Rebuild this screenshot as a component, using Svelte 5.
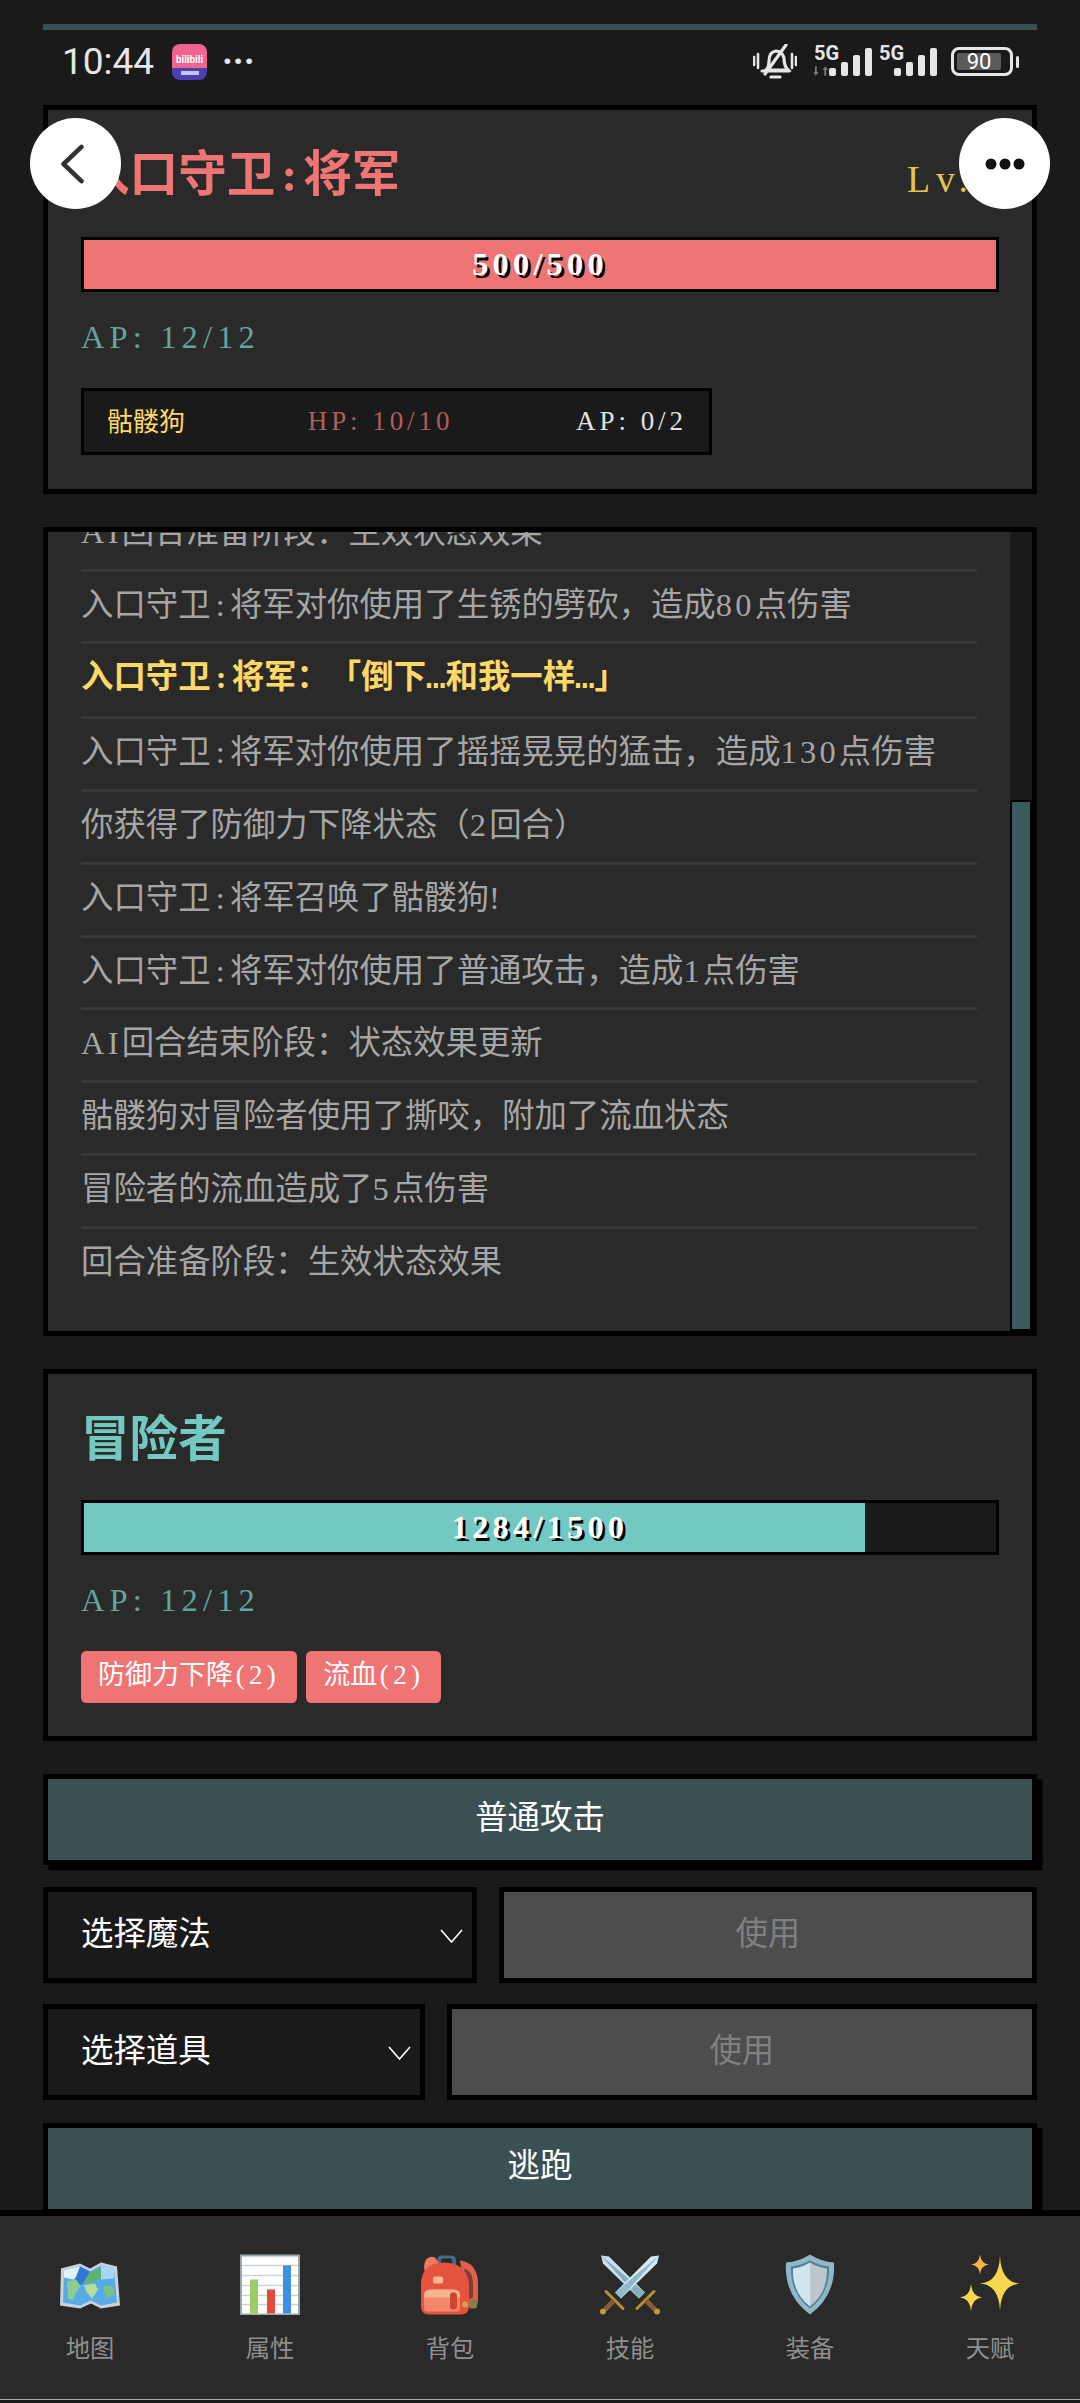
<script>
	const logs = [
		{ text: '战斗开始！' },
		{ text: '回合准备阶段：生效状态效果' },
		{ text: '冒险者对入口守卫:将军使用了普通攻击，造成1点伤害' },
		{ text: '回合结束阶段：状态效果更新' },
		{ text: 'AI回合准备阶段：生效状态效果' },
		{ text: '入口守卫:将军对你使用了普通攻击，造成1点伤害' },
		{ text: 'AI回合准备阶段：生效状态效果' },
		{ text: '入口守卫:将军对你使用了生锈的劈砍，造成80点伤害' },
		{ text: '入口守卫:将军：「倒下…和我一样…」', shout: true },
		{ text: '入口守卫:将军对你使用了摇摇晃晃的猛击，造成130点伤害' },
		{ text: '你获得了防御力下降状态（2回合）' },
		{ text: '入口守卫:将军召唤了骷髅狗!' },
		{ text: '入口守卫:将军对你使用了普通攻击，造成1点伤害' },
		{ text: 'AI回合结束阶段：状态效果更新' },
		{ text: '骷髅狗对冒险者使用了撕咬，附加了流血状态' },
		{ text: '冒险者的流血造成了5点伤害' },
		{ text: '回合准备阶段：生效状态效果' }
	];

	const tabs = ['地图', '属性', '背包', '技能', '装备', '天赋'];

	function parts(text) {
		return text
			.split(/([A-Za-z0-9!/().]+|:|…)/)
			.filter(Boolean)
			.map((t) => ({ t, cls: t === ':' ? 'colon' : t === '…' ? 'ell' : /^[A-Za-z0-9!/().]+$/.test(t) ? 'lat' : '' }));
	}

	function scrollEnd(node) {
		node.scrollTop = node.scrollHeight;
	}

	function star(cx, cy, rx, ry) {
		return `M${cx} ${cy - ry}Q${cx + 1} ${cy - 1} ${cx + rx} ${cy}Q${cx + 1} ${cy + 1} ${cx} ${cy + ry}Q${cx - 1} ${cy + 1} ${cx - rx} ${cy}Q${cx - 1} ${cy - 1} ${cx} ${cy - ry}Z`;
	}
</script>

{#snippet rich(text)}
	{#each parts(text) as p}{#if p.cls}<span class={p.cls}>{p.t}</span>{:else}{p.t}{/if}{/each}
{/snippet}

{#snippet chevron()}
	<svg class="chevron" viewBox="0 0 23 14" fill="none" stroke="#fff" stroke-width="1.6">
		<path d="M1 1l10.5 12L22 1" />
	</svg>
{/snippet}

{#snippet signal()}
	<svg class="signal" viewBox="0 0 44 30" fill="#e6e6e6">
		<rect x="0" y="21" width="7" height="8" rx="2" />
		<rect x="12" y="15" width="7" height="14" rx="2" />
		<rect x="24" y="8" width="7" height="21" rx="2" />
		<rect x="36" y="1" width="7" height="28" rx="2" />
	</svg>
{/snippet}

{#snippet tabIcon(name)}
	<svg class="tab-icon" viewBox="0 0 60 60">
		{#if name === '地图'}
			<path d="M1 14l19-5 10 5 11-6 16 4 3 39-19 3-10-5-11 5-20-3z" fill="#c9d2d8" />
			<path d="M4 16l16-4 10 5 11-6 13 3 3 34-16 3-10-5-11 5-17-3z" fill="#57abe6" />
			<path d="M4 16l16-4v8l-7 5-9-2z" fill="#e3f2fa" />
			<path d="M20 12l10 5-7 12-5 3-3-7z" fill="#2f78d8" />
			<path d="M30 18l11-4v9l-9 5-9 1z" fill="#5fb56b" />
			<path d="M41 11l13 3v10l-13 1z" fill="#a8d6f2" />
			<path d="M7 27l9-2 5 7-5 6-3 8-5-2z" fill="#8ccd90" />
			<path d="M24 31l11-2 3 6-6 9-5-6z" fill="#b7dd96" />
			<path d="M43 31l10 1 2 8-9 4z" fill="#7cc08a" />
		{:else if name === '属性'}
			<rect x="1" y="1" width="58" height="59" fill="#fff" stroke="#9aa4ab" stroke-width="2" />
			<path d="M2 11h56M2 21h56M2 31h56M2 41h56M2 50h56" stroke="#ccd2d6" stroke-width="1.5" />
			<rect x="10" y="25" width="8" height="34" fill="#9ccc65" />
			<rect x="27" y="35" width="8" height="24" fill="#e5483d" />
			<rect x="43" y="11" width="8" height="48" fill="#3d8fe0" />
		{:else if name === '背包'}
			<path d="M17 6q0-5 5-5h9q5 0 5 5v4h-4V6q0-2-2-2h-7q-2 0-2 2v4h-4z" fill="#3f6f85" />
			<path d="M40 6q17 2 18 22v18q0 6-5 6l-6-2z" fill="#e2604a" />
			<path d="M44 14q9 3 9 15v14l-6 3z" fill="#7a4038" />
			<path d="M6 5q4-4 9-2l5 7-14 9q-4-6 0-14z" fill="#ef7a60" />
			<path d="M1 30Q1 9 24 8q24 1 25 22v22q0 8-9 8H10q-9 0-9-8z" fill="#e5533f" />
			<rect x="13" y="22" width="10" height="7" rx="1.5" fill="#f7b48e" />
			<path d="M4 42q0-7 7-7h22q7 0 7 7v12q0 3-3 3H7q-3 0-3-3z" fill="#f2876a" />
			<path d="M4 41q0-6 7-6h22q7 0 7 6v2H4z" fill="#f7b48e" />
			<rect x="30" y="38" width="7" height="17" rx="3" fill="#cf4333" />
			<circle cx="45" cy="50" r="3" fill="#c9a64a" />
			<rect x="49" y="45" width="8" height="9" rx="2" fill="#8a7a50" />
		{:else if name === '技能'}
			<g>
				<path d="M1 1l8 1 36 36-6 6L3 9z" fill="#c9e2ee" />
				<path d="M1 1l44 37-6 6z" fill="#86aec3" />
				<path d="M37 54l17-17" stroke="#b8902f" stroke-width="3" stroke-linecap="round" />
				<path d="M46 46l9 9" stroke="#8a5a3a" stroke-width="5" />
				<circle cx="57" cy="57" r="3" fill="#c39a35" />
			</g>
			<g>
				<path d="M59 1l-8 1-36 36 6 6 36-35z" fill="#d6e9f2" />
				<path d="M59 1L15 38l6 6z" fill="#93b9cc" />
				<path d="M23 54L6 37" stroke="#b8902f" stroke-width="3" stroke-linecap="round" />
				<path d="M14 46l-9 9" stroke="#8a5a3a" stroke-width="5" />
				<circle cx="3" cy="57" r="3" fill="#c39a35" />
			</g>
		{:else if name === '装备'}
			<path d="M30 0q11 7 24 8 2 33-24 52Q4 41 6 8q13-1 24-8z" fill="#8fb6c9" />
			<path d="M30 6q9 5 19 6 1 27-19 42Q10 39 11 12q10-1 19-6z" fill="#4f8296" />
			<path d="M30 8v44Q12 38 13 14q9-1 17-6z" fill="#d0e5ef" />
			<path d="M30 8q8 5 17 6 1 24-17 38z" fill="#bdc6cd" />
		{:else}
			<path d={star(40, 29, 20, 28)} fill="#f8d64e" />
			<path d={star(20, 10, 9, 10)} fill="#f4b63f" />
			<path d={star(11, 43, 11, 14)} fill="#f8d64e" />
		{/if}
	</svg>
{/snippet}

<div class="page">
	<main class="content">
		<div class="top-strip"></div>

		<div class="status-bar">
			<div class="status-left">
				<span class="clock">10:44</span>
				<div class="app-badge">
					<span>bilibili</span>
					<i></i>
				</div>
				<span class="more-dots">···</span>
			</div>
			<div class="status-right">
				<svg class="bell" viewBox="0 0 44 36" fill="none" stroke="#e6e6e6" stroke-width="3.2">
					<path d="M13 26q3-3 3-9 0-9 7-10 6 0 8 7 0 8 4 12z" />
					<path d="M9 27h27" stroke-linecap="round" />
					<path d="M12 30L33 1" stroke-linecap="round" />
					<path d="M18 33h9" stroke-linecap="round" />
					<path d="M1 13v8M5 10v14M39 10v14M43 13v8" stroke-width="2.6" stroke-linecap="round" />
				</svg>
				<div class="net">
					<div class="net-label">
						<b>5G</b>
						<svg class="arrows" viewBox="0 0 16 10" fill="#777"><path d="M1 0h2v6h2L2 10-1 6h2zM11 10h2V4h2l-3-4-3 4h2z" /></svg>
					</div>
					{@render signal()}
				</div>
				<div class="net second">
					<div class="net-label"><b>5G</b></div>
					{@render signal()}
				</div>
				<div class="battery">
					<div class="battery-body">
						<div class="battery-fill">90</div>
					</div>
					<div class="battery-nub"></div>
				</div>
			</div>
		</div>

		<section class="card enemy">
			<div class="card-head">
				<h2 class="enemy-name">{@render rich('入口守卫:将军')}</h2>
				<span class="level">Lv.5</span>
			</div>
			<div class="hp-bar">
				<div class="hp-fill enemy-fill" style="width: 100%"></div>
				<span class="hp-text">500/500</span>
			</div>
			<div class="ap">AP: 12/12</div>
			<div class="minion">
				<span class="minion-name">骷髅狗</span>
				<span class="minion-hp">HP: 10/10</span>
				<span class="minion-ap">AP: 0/2</span>
			</div>
		</section>

		<section class="log">
			<div class="log-list" use:scrollEnd>
				{#each logs as row}
					<div class="log-row" class:shout={row.shout}>{@render rich(row.text)}</div>
				{/each}
			</div>
			<div class="log-bar"><div class="log-thumb"></div></div>
		</section>

		<section class="card player">
			<h2 class="player-name">冒险者</h2>
			<div class="hp-bar">
				<div class="hp-fill player-fill" style="width: 85.6%"></div>
				<span class="hp-text">1284/1500</span>
			</div>
			<div class="ap">AP: 12/12</div>
			<div class="tags">
				<span class="tag">防御力下降<span class="lat">(2)</span></span>
				<span class="tag">流血<span class="lat">(2)</span></span>
			</div>
		</section>

		<button class="action attack">普通攻击</button>

		<div class="use-row magic">
			<div class="picker">选择魔法{@render chevron()}</div>
			<button class="use" disabled>使用</button>
		</div>

		<div class="use-row item">
			<div class="picker">选择道具{@render chevron()}</div>
			<button class="use" disabled>使用</button>
		</div>

		<button class="action flee">逃跑</button>
	</main>

	<nav class="tabs">
		{#each tabs as tab}
			<div class="tab">
				{@render tabIcon(tab)}
				<span>{tab}</span>
			</div>
		{/each}
	</nav>

	<div class="float-btn back">
		<svg viewBox="0 0 30 44" fill="none" stroke="#333" stroke-width="5" stroke-linecap="round" stroke-linejoin="round">
			<path d="M25 3L5 22l20 19" />
		</svg>
	</div>
	<div class="float-btn menu">
		<svg viewBox="0 0 40 12" fill="#111">
			<circle cx="6" cy="6" r="5.5" />
			<circle cx="20" cy="6" r="5.5" />
			<circle cx="34" cy="6" r="5.5" />
		</svg>
	</div>
</div>

<style>
	:global(body) {
		margin: 0;
		background: #1a1a1a;
		overflow: hidden;
	}

	.page {
		position: relative;
		display: flex;
		flex-direction: column;
		height: 2403px;
		font-family: 'Liberation Serif', 'Noto Sans CJK SC', serif;
		font-size: 32.4px;
		text-spacing-trim: space-all;
		color: #e0e0e0;
		background: #1a1a1a;
	}

	.lat {
		letter-spacing: 0.1em;
	}

	.colon {
		padding: 0 0.16em;
	}

	h2 .colon {
		padding: 0 0.12em;
	}

	.ell {
		font-family: 'Liberation Mono', monospace;
	}

	.content {
		flex: 1;
		min-height: 0;
		overflow: hidden;
		padding: 24px 43px 0;
	}

	.top-strip {
		height: 6px;
		background: #3a5052;
	}

	.status-bar {
		display: flex;
		justify-content: space-between;
		align-items: center;
		box-sizing: border-box;
		height: 75px;
		padding: 0 18px 12px 19px;
		font-family: Roboto, sans-serif;
		color: #e6e6e6;
	}

	.status-left,
	.status-right {
		display: flex;
		align-items: center;
	}

	.clock {
		font-size: 37px;
		width: 110px;
	}

	.app-badge {
		display: flex;
		flex-direction: column;
		align-items: center;
		box-sizing: border-box;
		width: 35px;
		height: 36px;
		padding-top: 10px;
		border-radius: 8px;
		background: linear-gradient(#f0648f 0 66%, #4d3fae 66%);
		font-size: 10px;
		font-weight: 700;
		line-height: 12px;
		color: #fff;
	}

	.app-badge i {
		width: 18px;
		height: 4px;
		margin-top: 5px;
		background: #c9c6ee;
	}

	.more-dots {
		margin-left: 15px;
		font-size: 36px;
		font-weight: 700;
		line-height: 30px;
	}

	.bell {
		width: 44px;
		height: 36px;
		margin-right: 17px;
	}

	.net {
		display: flex;
		align-items: flex-end;
		width: 59px;
		height: 30px;
	}

	.net.second {
		width: 58px;
		margin-left: 6px;
		margin-right: 14px;
	}

	.net-label {
		display: flex;
		flex-direction: column;
		width: 15px;
		height: 30px;
	}

	.net-label b {
		margin-top: -2px;
		font-size: 20px;
		line-height: 16px;
	}

	.arrows {
		width: 15px;
		height: 10px;
		margin-top: 5px;
	}

	.signal {
		width: 44px;
		height: 30px;
		flex-shrink: 0;
	}

	.battery {
		display: flex;
		align-items: center;
	}

	.battery-body {
		box-sizing: border-box;
		width: 62px;
		height: 29px;
		padding: 3px;
		border: 3px solid #e6e6e6;
		border-radius: 8px;
	}

	.battery-fill {
		width: 44px;
		height: 100%;
		border-radius: 2px;
		background: #5a5a5a;
		font-size: 22px;
		line-height: 17px;
		text-align: center;
		color: #fff;
	}

	.battery-nub {
		width: 3px;
		height: 12px;
		margin-left: 3px;
		border-radius: 2px;
		background: #e6e6e6;
	}

	.card {
		box-sizing: border-box;
		padding: 33px;
		border: 5.4px solid #000;
		background: #2a2a2a;
	}

	.enemy {
		height: 389px;
	}

	.player {
		height: 372px;
		margin-top: 33px;
	}

	.card-head {
		display: flex;
		justify-content: space-between;
		align-items: center;
		height: 60px;
		margin-top: 2px;
		margin-bottom: 32px;
	}

	h2 {
		margin: 0;
		font-size: 48.6px;
		line-height: 60px;
		font-weight: 700;
	}

	.enemy-name {
		color: #ef7575;
	}

	.level {
		margin-top: 8px;
		font-size: 37.8px;
		letter-spacing: 0.16em;
		color: #e3c64f;
	}

	.player-name {
		height: 60px;
		margin-top: 3px;
		margin-bottom: 30px;
		color: #73c9c1;
	}

	.hp-bar {
		position: relative;
		box-sizing: border-box;
		height: 55px;
		border: 3px solid #000;
		background: #1a1a1a;
		text-align: center;
	}

	.hp-fill {
		height: 100%;
	}

	.enemy-fill {
		background: #ef7575;
	}

	.player-fill {
		background: #73c9c1;
	}

	.hp-text {
		position: absolute;
		inset: 0;
		line-height: 49px;
		font-weight: 700;
		letter-spacing: 0.13em;
		color: #fff;
		text-shadow: 2.7px 2.7px 0 #000;
	}

	.ap {
		margin-top: 26px;
		line-height: 38px;
		letter-spacing: 0.16em;
		color: #62a59d;
	}

	.minion {
		display: flex;
		align-items: center;
		justify-content: space-between;
		box-sizing: border-box;
		width: 631px;
		height: 67px;
		margin-top: 32px;
		padding: 0 22px 0 23px;
		border: 3px solid #000;
		background: #1a1a1a;
		font-size: 27px;
	}

	.minion-hp,
	.minion-ap {
		letter-spacing: 0.146em;
	}

	.minion-name {
		margin-bottom: 5px;
		color: #ffd966;
		font-size: 26px;
	}

	.minion-hp {
		color: #b25c5c;
	}

	.log {
		display: flex;
		box-sizing: border-box;
		height: 809px;
		margin-top: 33px;
		border: 5.4px solid #000;
		background: #2a2a2a;
		color: #a6a6a6;
	}

	.log-list {
		flex: 1;
		min-width: 0;
		padding: 15px 33px 32px;
		overflow: hidden;
	}

	.log-bar {
		display: flex;
		align-items: flex-end;
		width: 21.6px;
		background: #1a1a1a;
	}

	.log-thumb {
		flex: 1;
		box-sizing: border-box;
		height: 531px;
		border: 2.7px solid #000;
		background: #3a5a60;
	}

	.log-row {
		padding: 15px 0 17px;
		line-height: 37.8px;
		border-bottom: 3px solid #383838;
		white-space: nowrap;
	}

	.log-row:last-child {
		border-bottom: 0;
	}

	.shout {
		font-weight: 700;
		color: #ffd966;
	}

	.tags {
		display: flex;
		gap: 9px;
		margin-top: 32px;
	}

	.tag {
		padding: 0 17px;
		height: 52px;
		line-height: 48px;
		border-radius: 5.4px;
		background: #ef7575;
		color: #fff;
		font-size: 27px;
	}

	.tag .lat {
		letter-spacing: 0.16em;
		margin-left: 0.1em;
	}

	button {
		display: block;
		box-sizing: border-box;
		margin: 0;
		padding: 0 0 10px;
		border: 5.4px solid #000;
		border-radius: 0;
		font-family: inherit;
		font-size: 32.4px;
	}

	.action {
		width: 100%;
		height: 91px;
		background: #3a5052;
		color: #fff;
		box-shadow: 5.4px 5.4px 0 #000;
	}

	.attack {
		margin-top: 33px;
	}

	.flee {
		margin-top: 23px;
		padding-bottom: 13px;
	}

	.use-row {
		display: grid;
		gap: 21.6px;
		height: 96px;
	}

	.magic {
		grid-template-columns: 434px 1fr;
		margin-top: 22px;
	}

	.item {
		grid-template-columns: 382px 1fr;
		margin-top: 21px;
	}

	.picker {
		display: flex;
		align-items: center;
		justify-content: space-between;
		box-sizing: border-box;
		padding: 0 9px 10px 33px;
		border: 5.4px solid #000;
		background: #1a1a1a;
		color: #fff;
	}

	.chevron {
		width: 23px;
		height: 14px;
		margin-top: 12px;
	}

	.use {
		background: #4d4d4d;
		color: #808080;
	}

	.tabs {
		display: grid;
		grid-template-columns: repeat(6, 180px);
		flex-shrink: 0;
		height: 190px;
		margin-bottom: 3px;
		box-sizing: border-box;
		border-top: 6px solid #000;
		border-bottom: 1px solid #aaa;
		background: #2a2a2a;
	}

	.tab {
		display: flex;
		flex-direction: column;
		align-items: center;
		padding-top: 38px;
		color: #8f8f8f;
		font-size: 24.3px;
		line-height: 34px;
	}

	.tab-icon {
		width: 60px;
		height: 61px;
		margin-bottom: 17px;
	}

	.float-btn {
		position: absolute;
		top: 118px;
		display: flex;
		align-items: center;
		justify-content: center;
		width: 91px;
		height: 91px;
		border-radius: 50%;
		background: #fff;
	}

	.back {
		left: 30px;
	}

	.back svg {
		width: 27px;
		height: 40px;
		margin-right: 6px;
	}

	.menu {
		left: 959px;
	}

	.menu svg {
		width: 40px;
		height: 12px;
	}
</style>
